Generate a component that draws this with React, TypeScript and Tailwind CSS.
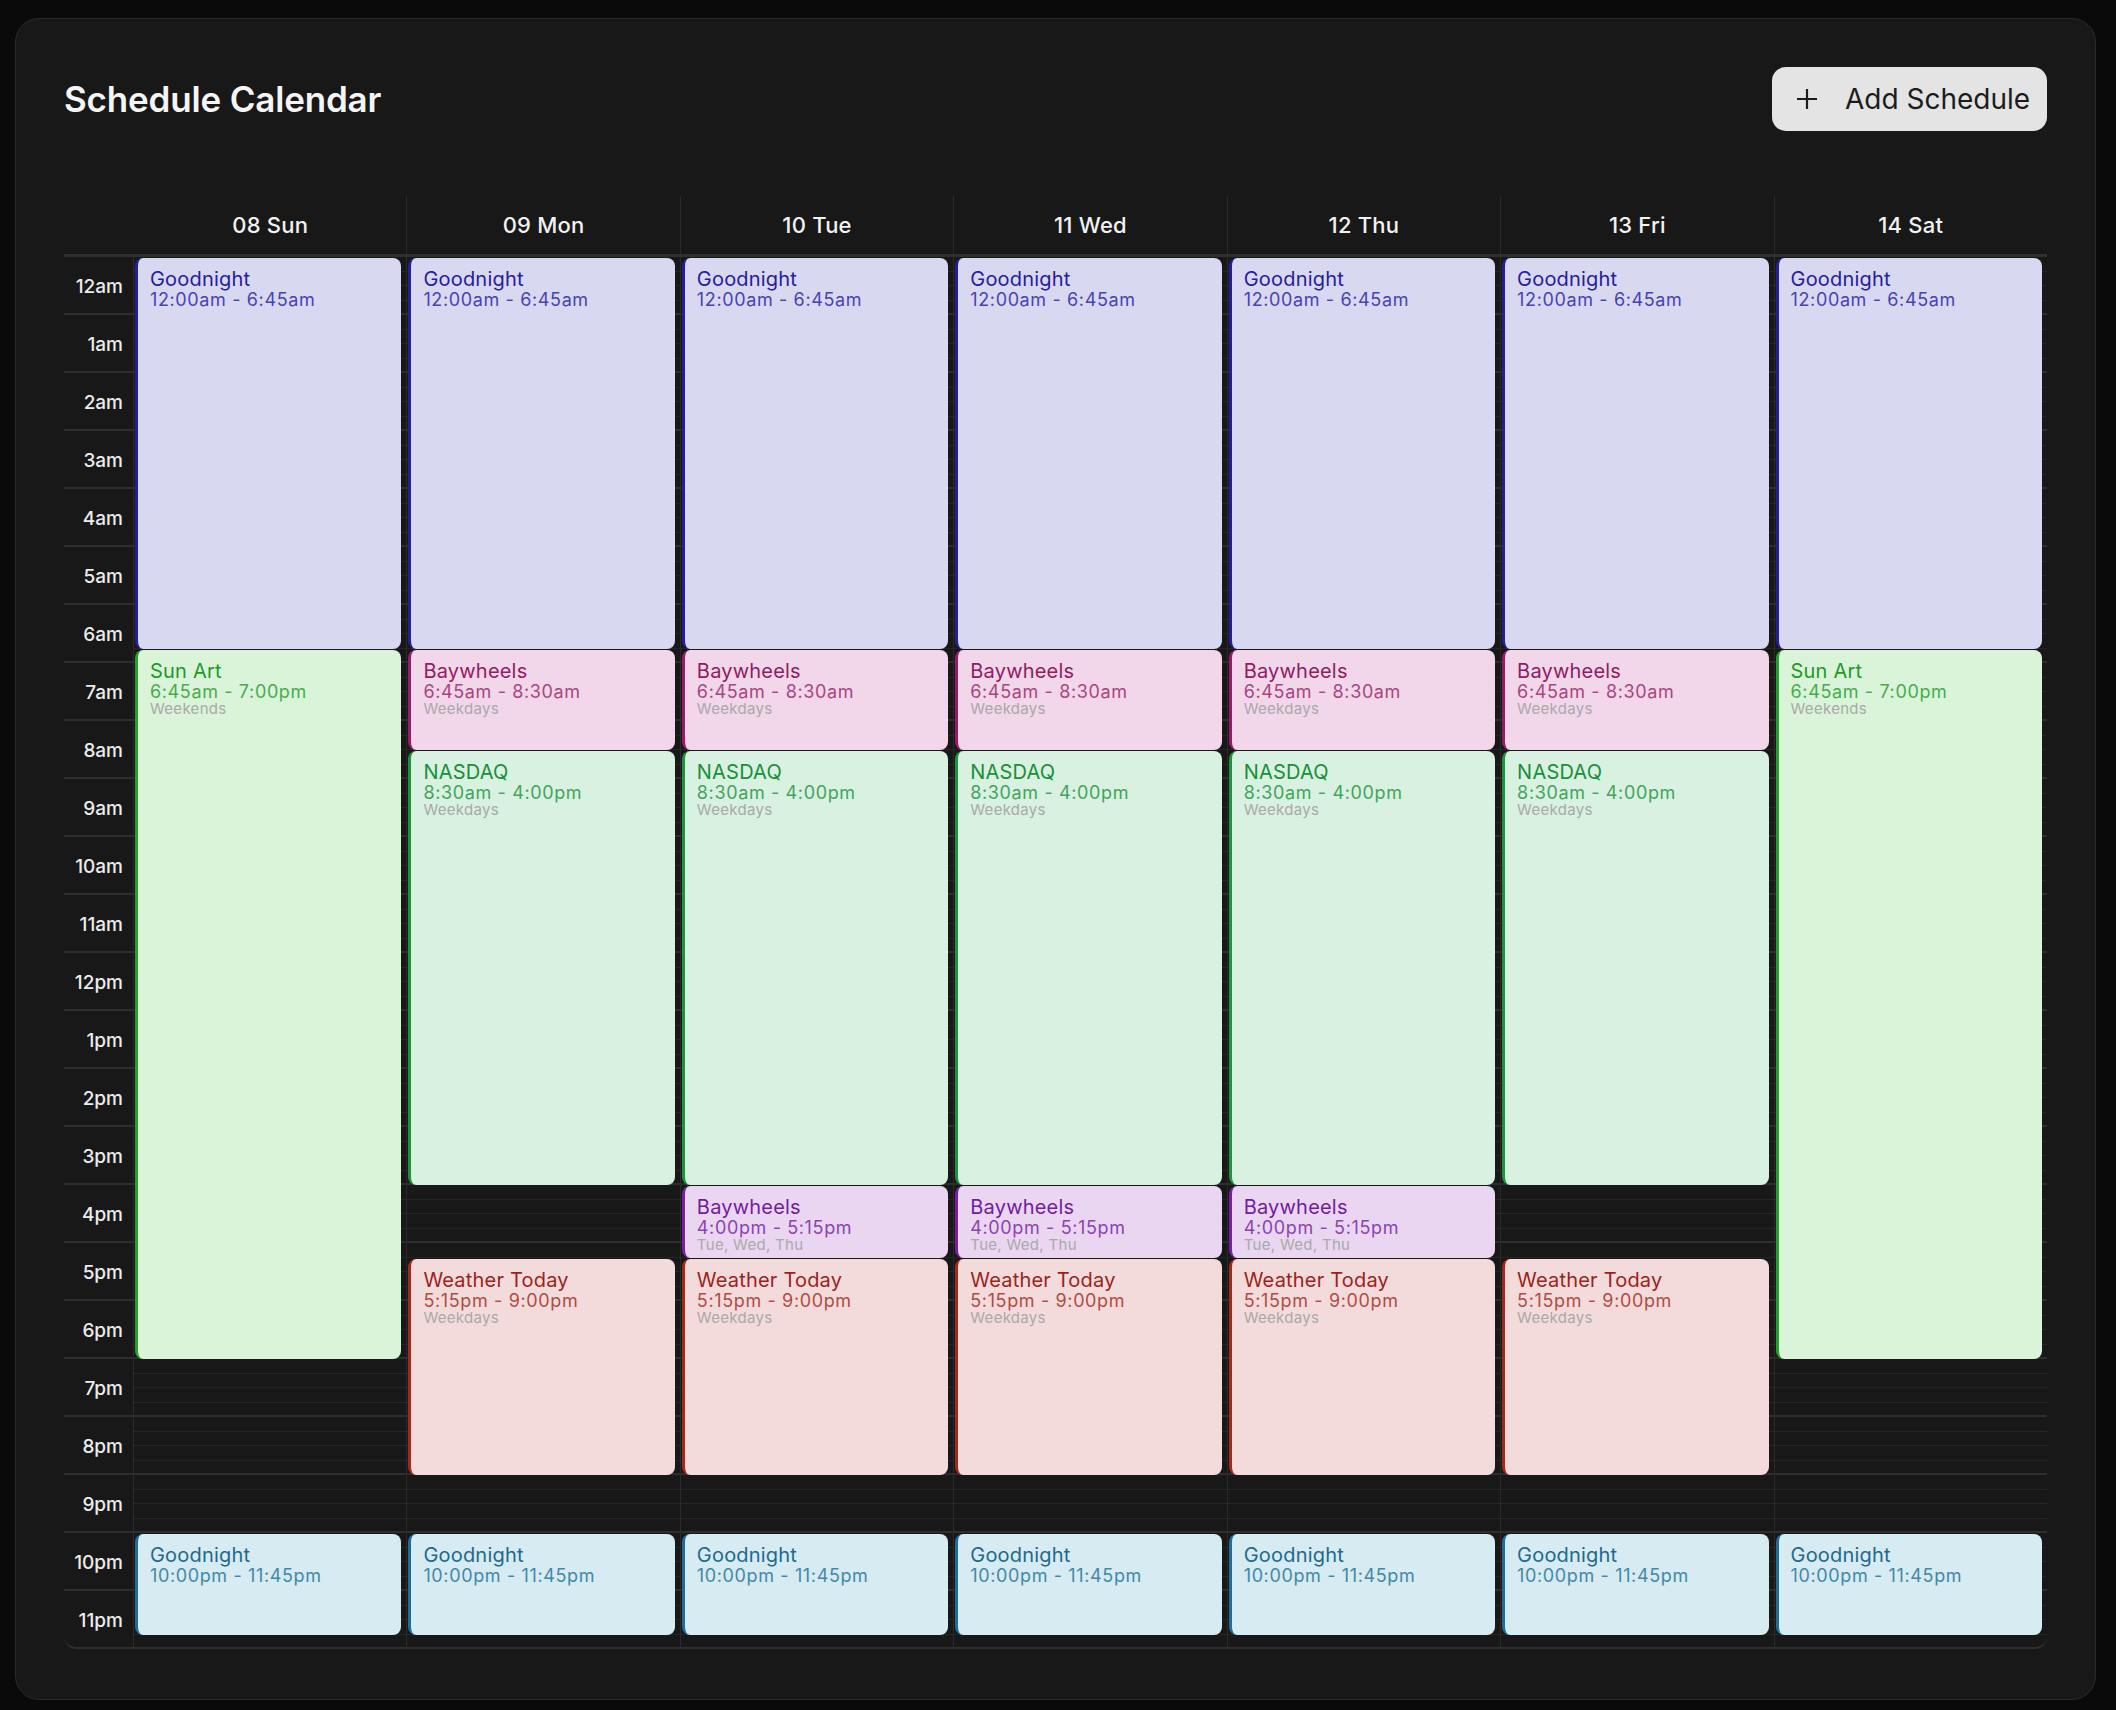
const HOUR = 58;
const hours = ['12am', '1am', '2am', '3am', '4am', '5am', '6am', '7am', '8am', '9am', '10am', '11am', '12pm', '1pm', '2pm', '3pm', '4pm', '5pm', '6pm', '7pm', '8pm', '9pm', '10pm', '11pm'];

type Tone = { box: string; title: string; time: string };

const tones: Record<string, Tone> = {
  night: { box: 'bg-[#d9d8f1] border-[#231f9c]', title: 'text-[#26209a]', time: 'text-[#4843b3]' },
  sun: { box: 'bg-[#d9f4d9] border-[#24a02c]', title: 'text-[#1f9a27]', time: 'text-[#47ad4b]' },
  bayAm: { box: 'bg-[#f2d6e9] border-[#9a1a69]', title: 'text-[#911b64]', time: 'text-[#a94583]' },
  nasdaq: { box: 'bg-[#d8f1e0] border-[#1b963d]', title: 'text-[#198f3a]', time: 'text-[#42a55c]' },
  bayPm: { box: 'bg-[#ead6f1] border-[#7a1ea8]', title: 'text-[#731c9e]', time: 'text-[#8c43b2]' },
  weather: { box: 'bg-[#f3dbdb] border-[#a5281e]', title: 'text-[#9c231a]', time: 'text-[#b14c43]' },
  eve: { box: 'bg-[#d7ebf2] border-[#1d6f98]', title: 'text-[#1d6a8e]', time: 'text-[#4289a8]' },
};

type Ev = { title: string; time: string; sub?: string; start: number; end: number; tone: string };

const h = (hh: number, mm = 0) => hh * 60 + mm;

const night: Ev = { title: 'Goodnight', time: '12:00am - 6:45am', start: 0, end: h(6, 45), tone: 'night' };
const eve: Ev = { title: 'Goodnight', time: '10:00pm - 11:45pm', start: h(22), end: h(23, 45), tone: 'eve' };
const sunArt: Ev = { title: 'Sun Art', time: '6:45am - 7:00pm', sub: 'Weekends', start: h(6, 45), end: h(19), tone: 'sun' };
const bayAm: Ev = { title: 'Baywheels', time: '6:45am - 8:30am', sub: 'Weekdays', start: h(6, 45), end: h(8, 30), tone: 'bayAm' };
const nasdaq: Ev = { title: 'NASDAQ', time: '8:30am - 4:00pm', sub: 'Weekdays', start: h(8, 30), end: h(16), tone: 'nasdaq' };
const bayPm: Ev = { title: 'Baywheels', time: '4:00pm - 5:15pm', sub: 'Tue, Wed, Thu', start: h(16), end: h(17, 15), tone: 'bayPm' };
const weather: Ev = { title: 'Weather Today', time: '5:15pm - 9:00pm', sub: 'Weekdays', start: h(17, 15), end: h(21), tone: 'weather' };

const weekend = [night, sunArt, eve];
const weekday = [night, bayAm, nasdaq, weather, eve];
const midweek = [night, bayAm, nasdaq, bayPm, weather, eve];

const days = [
  { label: '08 Sun', events: weekend },
  { label: '09 Mon', events: weekday },
  { label: '10 Tue', events: midweek },
  { label: '11 Wed', events: midweek },
  { label: '12 Thu', events: midweek },
  { label: '13 Fri', events: weekday },
  { label: '14 Sat', events: weekend },
];

function EventBlock({ ev }: { ev: Ev }) {
  const tone = tones[ev.tone];
  const top = (ev.start * HOUR) / 60 + 1;
  const height = ((ev.end - ev.start) * HOUR) / 60 - 1;
  return (
    <div
      className={`absolute left-[1px] right-[5px] overflow-hidden rounded-lg border-l-[3px] pl-3 pt-[10px] ${tone.box}`}
      style={{ top, height }}
    >
      <div className={`text-[20px] leading-[22px] tracking-[0.01em] ${tone.title}`}>{ev.title}</div>
      <div className={`text-[18px] leading-[19px] tracking-[0.035em] ${tone.time}`}>{ev.time}</div>
      {ev.sub && <div className="text-[15px] leading-[15px] tracking-[0.02em] text-[#a9a9a9]">{ev.sub}</div>}
    </div>
  );
}

function HourLines({ last }: { last: boolean }) {
  return (
    <div className={last ? 'h-[56px]' : 'h-[58px]'}>
      <div className="h-[14.5px] border-b border-[#252525]" />
      <div className="h-[14.5px] border-b border-[#252525]" />
      <div className="h-[14.5px] border-b border-[#252525]" />
      {!last && <div className="h-[14.5px] border-b-2 border-[#2e2e2e]" />}
    </div>
  );
}

export default function App() {
  return (
    <div className="min-h-screen bg-[#0a0a0a] pl-[15px] pt-[18px] font-['Inter','Noto_Sans',sans-serif]">
      <div className="w-[2081px] rounded-[24px] border border-[#2a2a2a] bg-[#181818] px-12 pt-12 pb-[50px]">
        <div className="flex h-16 items-center justify-between">
          <h1 className="text-[35px] font-semibold tracking-[-0.005em] text-[#f5f5f5]">Schedule Calendar</h1>
          <button className="flex h-16 w-[275px] items-center gap-[27px] rounded-[14px] bg-[#e4e4e4] pl-6 text-[28px] text-[#1c1c1c]">
            <svg width="22" height="22" viewBox="0 0 22 22" fill="none" stroke="currentColor" strokeWidth="2.2">
              <path d="M11 1v20M1 11h20" />
            </svg>
            Add Schedule
          </button>
        </div>

        <div className="mt-[65px]">
          <div className="flex h-[61px] border-b-[3px] border-[#2f2f2f]">
            <div className="w-[69px] shrink-0" />
            {days.map((d, i) => (
              <div
                key={d.label}
                className={`flex flex-1 items-center justify-center border-l text-[22px] font-medium tracking-[0.01em] text-[#f2f2f2] ${i === 0 ? 'border-transparent' : 'border-[#2a2a2a]'}`}
              >
                {d.label}
              </div>
            ))}
          </div>

          <div className="flex rounded-b-xl border-b-2 border-[#2e2e2e]">
            <div className="w-[69px] shrink-0">
              {hours.map((label, i) => (
                <div
                  key={label}
                  className={`flex items-center justify-end pt-[5px] pr-[10px] text-[19px] font-medium text-[#ececec] ${i === 23 ? 'h-[56px]' : 'h-[58px] border-b-2 border-[#2e2e2e]'}`}
                >
                  {label}
                </div>
              ))}
            </div>
            {days.map(d => (
              <div key={d.label} className="relative flex-1 border-l border-[#2a2a2a]">
                {hours.map((label, i) => (
                  <HourLines key={label} last={i === 23} />
                ))}
                {d.events.map(ev => (
                  <EventBlock key={ev.title + ev.start} ev={ev} />
                ))}
              </div>
            ))}
          </div>
        </div>
      </div>
    </div>
  );
}
